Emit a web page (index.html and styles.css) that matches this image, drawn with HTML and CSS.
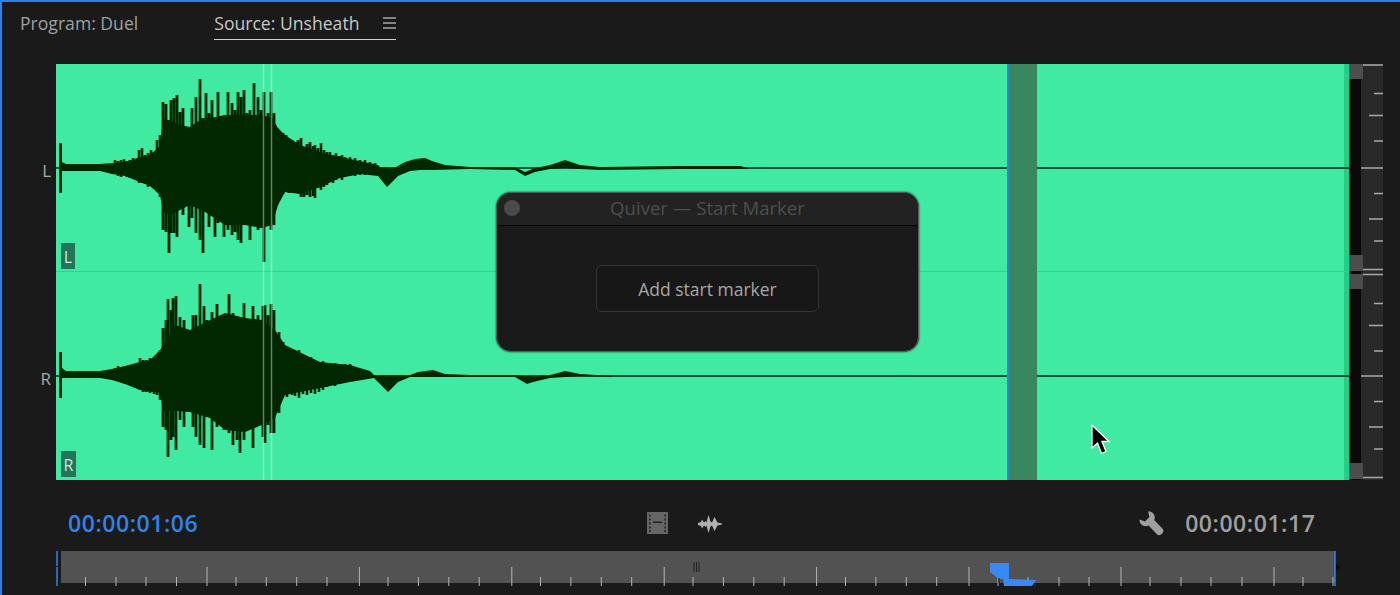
FILE: index.html
```html
<!DOCTYPE html>
<html>
<head>
    <meta name="viewport" content="width=device-width, initial-scale=1.0">
    <link rel="stylesheet" href="styles.css">
</head>
<body>
    <div class="panel">
        <!-- Tabs -->
        <div class="tabs">
            <span class="tab">Program: Duel</span>
            <span class="tab tab-active">
                Source: Unsheath
                <svg class="tab-menu" viewBox="0 0 13 12"><path d="M0 1H13M0 6H13M0 11H13"/></svg>
            </span>
        </div>

        <!-- Waveform viewer -->
        <div class="viewer">
            <div class="channel-labels">
                <span>L</span>
                <span>R</span>
            </div>

            <div class="wave">
                <div class="edge-strip"></div>
                <div class="channel-divider"></div>

                <svg class="wave-svg" viewBox="56 64 1293 416">
                    <!-- zero lines -->
                    <path class="zero-line" d="M56 168H1349M56 376H1349"/>

                    <!-- left channel -->
                    <path class="wave-fill" d="M59 168V143H62V162L66 164H100L112 163L125 162L140 157L150 155L160 146L163 118L180 125L190 127L200 120L225 115L245 115L262 115L272 118L278 128L285 135L300 145L330 155L350 159L378 165L380 167L396 167L405 162L415 159L425 158L432 161L445 165L470 167L515 167L525 172L535 168L550 165L565 160L580 165L600 167L680 166L740 166L748 168V169L680 169L600 170L580 169L565 168L550 169L535 172L525 176L515 170L470 169L432 170L420 170L410 171L398 176L387 187L378 176L360 174L340 178L320 187L300 194L285 192L278 205L272 225L262 228L245 225L225 225L205 212L190 205L170 215L163 212L160 195L150 186L140 182L125 176L112 174L100 171L66 171H62V193H59Z"/>
                    <path class="wave-bars" d="M163 102V230M166 104V232M169 120V253M171 100V233M174 98V233M177 95V237M180 112V200M183 108V215M186 127V197M189 127V227M192 108V218M196 97V233M200 79V240M203 118V253M206 93V210M209 113V227M212 100V207M215 120V237M218 92V223M221 125V210M224 117V237M228 92V230M232 103V235M235 110V232M238 92V240M241 97V243M244 90V210M247 113V217M250 110V240M254 83V217M258 97V230M261 110V228M264 92V262M268 113V213M271 92V230M274 113V225M277 128V205M280 135V198M283 133V194M286 135V192M289 142V193M292 140V190M295 142V188M298 140V192M301 138V197M304 147V197M307 144V195M310 142V197"/>
                    <path class="wave-thin" d="M115 160V174M118 161V176M121 160V177M124 159V174M127 161V177M130 160V178M133 158V176M136 161V180M139 150V183M142 148V183M145 155V184M148 153V187M151 150V186M154 152V187M157 140V190M160 135V197M313 146V196M315 145V198M318 148V188M321 143V190M324 150V187M327 152V185M330 152V182M333 155V183M336 153V180M339 156V178M342 155V180M345 157V177M350 157V176M355 158V176M360 160V175M365 160V175M370 162V175M375 163V175"/>

                    <!-- right channel -->
                    <path class="wave-fill" d="M59 376V352H62V368L66 371H100L112 369L125 366L140 362L150 360L160 350L163 345L175 325L190 330L210 320L225 313L245 318L262 320L275 330L285 345L320 362L350 365L370 371L374 375L410 375L418 372L433 370L445 374L470 375L515 375L525 376L550 375L565 371L580 374L612 376V377L580 376L550 378L533 382L527 384L515 377L430 377L410 377L398 382L388 392L374 378L350 382L320 388L285 395L275 418L262 425L245 432L225 430L210 418L190 412L163 410L160 392L150 392L140 390L125 384L112 380L100 378L66 378H62V398H59Z"/>
                    <path class="wave-bars" d="M163 328V427M166 320V430M168 299V457M171 310V440M173 298V437M176 296V450M180 317V420M184 320V427M188 333V407M193 315V427M196 315V437M200 284V445M204 306V448M207 320V417M212 312V450M217 304V427M220 333V412M224 320V430M229 294V433M233 313V445M237 318V440M240 317V453M244 303V440M248 327V410M253 306V448M258 315V413M263 306V437M265 305V443M268 315V425M271 304V433M274 310V433M279 332V413M283 342V395"/>
                    <path class="wave-thin" d="M115 368V380M118 366V381M122 367V383M125 366V384M128 367V383M131 365V386M134 366V383M137 367V388M140 358V390M143 360V392M146 360V392M150 358V393M154 361V394M157 357V395M160 350V400M287 348V397M292 352V395M295 350V396M299 350V398M303 355V394M307 357V395M311 357V393M315 360V394M319 362V392M323 361V390M327 363V387M331 363V385M335 363V386M340 365V384M345 364V382M350 364V382M355 367V381M360 369V380M365 370V379M370 372V378"/>

                    <!-- in-point lines -->
                    <path class="in-line" d="M263.5 64V480M271.5 64V480"/>
                </svg>

                <span class="badge badge-l">L</span>
                <span class="badge badge-r">R</span>
                <div class="marker"></div>

                <svg class="cursor" viewBox="0 0 20 32"><path d="M1 1V24L6.5 19L10.5 29.5L15 27.5L11 17.5H18Z"/></svg>

                <!-- Floating window -->
                <div class="dialog">
                    <div class="dialog-title">
                        <span class="dialog-dot"></span>
                        Quiver — Start Marker
                    </div>
                    <div class="dialog-body">
                        <button class="dialog-btn">Add start marker</button>
                    </div>
                </div>
            </div>

            <svg class="meter" viewBox="1349 64 34 416">
                <rect class="meter-track" x="1349" y="64" width="12" height="416"/>
                <rect class="meter-ruler" x="1361" y="64" width="22" height="416"/>
                <rect class="meter-handle" x="1349" y="64" width="14" height="15"/>
                <rect class="meter-handle" x="1349" y="255" width="14" height="16"/>
                <rect class="meter-handle" x="1349" y="274" width="14" height="15"/>
                <rect class="meter-handle" x="1349" y="463" width="14" height="16"/>
                <path class="meter-ticks" d="M1363 65H1383M1374 93.5H1383M1369 115.5H1383M1374 141H1383M1361 168H1383M1374 193.5H1383M1369 219H1383M1374 241H1383M1363 269.5H1383M1363 274.5H1383M1374 303.5H1383M1369 325.5H1383M1374 351H1383M1361 376H1383M1374 401.5H1383M1369 427H1383M1374 449H1383M1363 477.5H1383"/>
            </svg>
        </div>

        <!-- Timecode row -->
        <div class="controls">
            <span class="timecode timecode-current">00:00:01:06</span>
            <div class="control-icons">
                <svg class="icon-film" viewBox="0 0 21 22">
                    <rect width="21" height="22" fill="#666"/>
                    <path d="M2 2.5h1.6v2H2zM2 6.5h1.6v2H2zM2 10.5h1.6v2H2zM2 14.5h1.6v2H2zM2 18h1.6v2H2zM17.4 2.5H19v2h-1.6zM17.4 6.5H19v2h-1.6zM17.4 10.5H19v2h-1.6zM17.4 14.5H19v2h-1.6zM17.4 18H19v2h-1.6zM6 9.5h9v1.6H6z" fill="#222"/>
                </svg>
                <svg class="icon-wave" viewBox="0 0 24 18">
                    <path d="M0 8L3 7L4 4.5L6 7.5L7.5 6L8.5 7.5L10.5 0L12.5 6.5L14 7.5L16.5 2L19.5 7.5L24 8.5V9.5L19.5 10.5L16.5 16L14 10.5L12.5 11.5L10.5 18L8.5 10.5L7.5 12L6 10.5L4 13.5L3 11L0 10Z"/>
                </svg>
            </div>
            <svg class="icon-wrench" viewBox="0 0 25 25">
                <path d="M9 .5C12.8 0 15.8 2.8 15.8 6.5C15.8 7.5 15.6 8.3 15.2 9L23.8 18C24.8 19.2 24.6 20.8 23.6 21.9L22 23.6C20.8 24.6 19.2 24.6 18.2 23.6L9.6 14.6C8.8 15 8 15.2 7 15.2C3 15.2 .2 12.2 .5 8.5L6 10.5L10.5 6Z"/>
            </svg>
            <span class="timecode">00:00:01:17</span>
        </div>

        <!-- Scrub bar -->
        <div class="scrub">
            <svg class="scrub-svg" viewBox="56 551 1284 42">
                <rect class="scrub-bar" x="61" y="551" width="1274" height="32"/>
                <path class="scrub-minor" d="M85.5 577V586M116 577V586M146 577V586M176.5 577V586M236 577V586M266.3 577V586M296.7 577V586M327 577V586M388 577V586M418.4 577V586M448.8 577V586M479.2 577V586M540.5 577V586M570.9 577V586M601.3 577V586M631.7 577V586M693 577V586M723.4 577V586M753.8 577V586M784.2 577V586M845.5 577V586M875.9 577V586M906.3 577V586M936.7 577V586M998 577V586M1028 577V586M1059 577V586M1089 577V586M1150 577V586M1181 577V586M1211 577V586M1242 577V586M1303 577V586M1333 577V586"/>
                <path class="scrub-major" d="M207 567V586M359.4 567V586M511.8 567V586M664.2 567V586M816.6 567V586M969 567V586M1121 567V586M1274 567V586"/>
                <path class="scrub-grip" d="M694 562V572M696.5 562V572M699 562V572"/>
                <path class="scrub-point" d="M57 551V566M57 567V586M1335 551V586"/>
                <path class="scrub-notch" d="M1336 564L1340 567.5L1336 571Z"/>
                <path class="scrub-head" d="M990 563H1009V579L1036 580L1032 586H1004L1003 579H999L990 572Z"/>
                <path class="scrub-needle" d="M999 578V583"/>
            </svg>
        </div>
    </div>
</body>
</html>
```

FILE: styles.css
```css
body {
    margin: 0;
    background-color: #1a1a1a;
    font-family: "Open Sans", sans-serif;
    overflow: hidden;
}

.panel {
    width: 1400px;
    height: 595px;
    box-sizing: border-box;
    border-top: 2px solid #2f7fe6;
    border-left: 2px solid #2f7fe6;
    display: flex;
    flex-direction: column;
    overflow: hidden;
}

/* Tabs */
.tabs {
    height: 62px;
    flex: none;
    display: flex;
    align-items: flex-start;
    gap: 76px;
    padding-left: 18px;
    box-sizing: border-box;
    padding-top: 9px;
}

.tab {
    font-size: 17.6px;
    line-height: 24px;
    color: #a0a0a0;
    white-space: nowrap;
}

.tab-active {
    display: flex;
    align-items: center;
    gap: 24px;
    color: #c8c8c8;
    padding-bottom: 4px;
    border-bottom: 1.5px solid #d0d0d0;
}

.tab-menu {
    width: 13px;
    height: 12px;
}

.tab-menu path {
    stroke: #a8a8a8;
    stroke-width: 1.3;
    fill: none;
}

/* Waveform viewer */
.viewer {
    height: 416px;
    flex: none;
    display: flex;
}

.channel-labels {
    width: 54px;
    flex: none;
    display: grid;
    grid-template-rows: 1fr 1fr;
    font-size: 17px;
    color: #a8a8a8;
    text-align: right;
    padding-right: 5px;
    box-sizing: border-box;
}

.channel-labels span {
    align-self: center;
    padding-top: 5px;
}

.wave {
    position: relative;
    width: 1293px;
    flex: none;
    background-color: #40eaa3;
}

.wave-svg {
    position: absolute;
    left: 0;
    top: 0;
    width: 100%;
    height: 100%;
}

.zero-line {
    stroke: #02201a;
    stroke-width: 1.5;
    fill: none;
}

.wave-fill {
    fill: #022800;
}

.wave-bars {
    stroke: #022800;
    stroke-width: 2.8;
    fill: none;
}

.wave-thin {
    stroke: #022800;
    stroke-width: 2.6;
    fill: none;
}

.in-line {
    stroke: rgba(255, 255, 255, 0.4);
    stroke-width: 1.5;
    fill: none;
}

.channel-divider {
    position: absolute;
    left: 0;
    right: 0;
    top: 207px;
    height: 1px;
    background-color: #2fd38f;
}

.edge-strip {
    position: absolute;
    right: 0;
    top: 0;
    bottom: 0;
    width: 5px;
    background-color: #22cf88;
}

.badge {
    position: absolute;
    left: 5px;
    height: 26px;
    line-height: 28px;
    text-align: center;
    font-size: 16px;
    color: #cfe6da;
    background-color: #20755a;
}

.badge-l {
    top: 179px;
    width: 14px;
}

.badge-r {
    top: 387px;
    width: 15px;
}

.marker {
    position: absolute;
    left: 951px;
    top: 0;
    bottom: 0;
    width: 28px;
    border-left: 2px solid #3a80d4;
    background-color: #39875f;
}

.cursor {
    position: absolute;
    left: 1035px;
    top: 360px;
    width: 20px;
    height: 32px;
}

.cursor path {
    fill: #000;
    stroke: #fff;
    stroke-width: 1.3;
}

/* Floating window */
.dialog {
    position: absolute;
    left: 440px;
    top: 128px;
    width: 423px;
    height: 160px;
    box-sizing: border-box;
    border: 1px solid #5a5a5a;
    border-radius: 15px;
    background-color: #1a1a1a;
    box-shadow: 0 0 2px #0b3a28;
    overflow: hidden;
}

.dialog-title {
    position: relative;
    height: 32px;
    line-height: 30px;
    text-align: center;
    font-size: 18.6px;
    color: #4e4e4e;
    background-color: #222;
    border-bottom: 1px solid #000;
}

.dialog-dot {
    position: absolute;
    left: 7px;
    top: 7px;
    width: 16px;
    height: 16px;
    border-radius: 50%;
    background-color: #4a4a4a;
}

.dialog-body {
    display: flex;
    justify-content: center;
    padding-top: 39px;
}

.dialog-btn {
    width: 223px;
    height: 47px;
    border: 1px solid #343434;
    border-radius: 6px;
    background-color: #171717;
    color: #a8a8a8;
    font-family: "Open Sans", sans-serif;
    font-size: 17.5px;
    padding: 0;
}

/* Meter */
.meter {
    width: 34px;
    height: 416px;
    flex: none;
}

.meter-track {
    fill: #0a0a0a;
}

.meter-ruler {
    fill: #292929;
}

.meter-handle {
    fill: #4d4d4d;
}

.meter-ticks {
    stroke: #aaa;
    stroke-width: 1.5;
    fill: none;
}

/* Timecode row */
.controls {
    height: 71px;
    flex: none;
    display: flex;
    align-items: center;
    padding-left: 66px;
    padding-top: 15px;
    box-sizing: border-box;
}

.timecode {
    font-size: 23px;
    font-weight: 600;
    letter-spacing: 0.55px;
    color: #a0a0a0;
    white-space: nowrap;
}

.timecode-current {
    color: #2f83ea;
}

.control-icons {
    display: flex;
    align-items: center;
    gap: 30px;
    margin-left: 449px;
}

.icon-film {
    width: 21px;
    height: 22px;
}

.icon-wave {
    width: 24px;
    height: 18px;
    fill: #b0b0b0;
    margin-top: 2px;
}

.icon-wrench {
    width: 25px;
    height: 25px;
    fill: #a0a0a0;
    margin-left: 417px;
    margin-right: 21px;
}

/* Scrub bar */
.scrub {
    flex: none;
    padding-left: 54px;
}

.scrub-svg {
    display: block;
    width: 1284px;
    height: 42px;
}

.scrub-bar {
    fill: #525252;
}

.scrub-minor,
.scrub-major {
    stroke: #b4b4b4;
    stroke-width: 1;
    fill: none;
}

.scrub-grip {
    stroke: #222;
    stroke-width: 1;
    fill: none;
}

.scrub-point {
    stroke: #2f83ea;
    stroke-width: 1.5;
    fill: none;
}

.scrub-notch {
    fill: #000;
}

.scrub-head {
    fill: #3b88f0;
}

.scrub-needle {
    stroke: #111;
    stroke-width: 1;
    fill: none;
}
```
